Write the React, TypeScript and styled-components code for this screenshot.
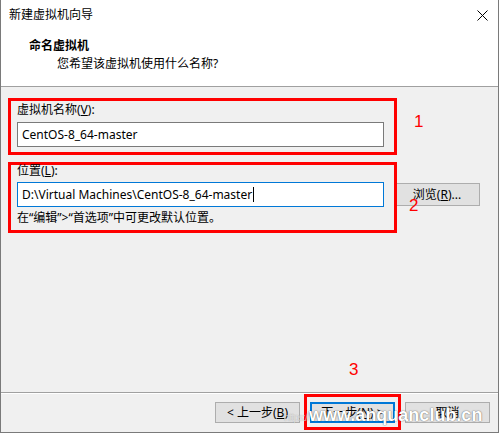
import React from "react";
import styled, { createGlobalStyle } from "styled-components";

const GlobalStyle = createGlobalStyle`
  html, body {
    margin: 0;
    padding: 0;
    background: #ffffff;
  }
  body {
    font-family: "Noto Sans", "Noto Sans CJK SC", sans-serif;
    font-size: 12px;
    color: #000;
  }
  * { box-sizing: border-box; }
`;

const Window = styled.div`
  position: relative;
  width: 499px;
  height: 433px;
  display: flex;
  flex-direction: column;
  border: 1px solid #7a7a7a;
  border-top: none;
  overflow: hidden;
`;

const TitleBar = styled.div`
  height: 30px;
  display: flex;
  align-items: center;
  padding: 0 10px 0 8px;
  background: #fff;
  line-height: 16px;
`;

const CloseIcon = styled.svg`
  margin-left: auto;
  width: 11px;
  height: 11px;
`;

const Header = styled.div`
  height: 57px;
  background: #fff;
  border-bottom: 1px solid #a0a0a0;
  padding: 8px 0 0 28px;
`;

const HeaderTitle = styled.div`
  font-weight: 700;
  line-height: 16px;
`;

const HeaderSub = styled.div`
  margin-top: 2px;
  padding-left: 28px;
  line-height: 16px;
`;

const Body = styled.div`
  flex: 1;
  background: #f0f0f0;
  padding: 11px 0 0 7px;
  display: flex;
  flex-direction: column;
  gap: 7px;
`;

const RedBox = styled.div<{ $pb: number }>`
  position: relative;
  width: 389px;
  border: 3px solid #ff0000;
  padding: 0 10px ${(p) => p.$pb}px 6px;
  z-index: 1;
`;

const Label = styled.div<{ $top: number }>`
  margin-top: ${(p) => p.$top}px;
  line-height: 16px;
`;

const TextField = styled.div<{ $focused?: boolean }>`
  margin-top: ${(p) => (p.$focused ? 3 : 4)}px;
  height: 25px;
  background: #fff;
  border: 1px solid ${(p) => (p.$focused ? "#0078d7" : "#7a7a7a")};
  padding-left: 4px;
  line-height: 23px;
  white-space: nowrap;
  display: flex;
  align-items: center;
`;

const Caret = styled.span`
  display: inline-block;
  width: 1px;
  height: 15px;
  background: #000;
  margin-left: 1px;
`;

const Hint = styled.div`
  margin-top: 3px;
  line-height: 16px;
`;

const LocationRow = styled.div`
  display: flex;
  align-items: flex-start;
`;

const Button = styled.button<{ $w: number; $h: number; $default?: boolean }>`
  position: relative;
  width: ${(p) => p.$w}px;
  height: ${(p) => p.$h}px;
  padding: 0;
  background: #e1e1e1;
  border: ${(p) => (p.$default ? "2px solid #0078d7" : "1px solid #adadad")};
  font: inherit;
  font-size: 12px;
  line-height: 16px;
  color: #000;
  white-space: nowrap;
`;

const BrowseButton = styled(Button)`
  margin: 21px 0 0 -3px;
  z-index: 0;
`;

const Highlight = styled.div`
  position: relative;
  &::after {
    content: "";
    position: absolute;
    left: -6px;
    right: -6px;
    top: -8px;
    bottom: -7px;
    border: 3px solid #ff0000;
    pointer-events: none;
  }
`;

const Footer = styled.div`
  height: 40px;
  border-top: 1px solid #a0a0a0;
  box-shadow: inset 0 1px #ffffff;
  background: #f0f0f0;
  display: flex;
  justify-content: flex-end;
  align-items: flex-start;
  gap: 10px;
  padding: 9px 8px 0 0;
`;

const Mark = styled.span<{ $x: number; $y: number }>`
  position: absolute;
  left: ${(p) => p.$x}px;
  top: ${(p) => p.$y}px;
  font-family: "Liberation Sans", Arial, sans-serif;
  font-size: 17px;
  line-height: 17px;
  color: #ff0000;
  z-index: 3;
`;

const Watermark = styled.div`
  position: absolute;
  left: 283px;
  top: 404px;
  display: flex;
  align-items: baseline;
  font-family: "Liberation Sans", Arial, sans-serif;
  color: #ffffff;
  text-shadow: 0 0 1px rgba(0, 0, 0, 0.6), 0 0 2px rgba(0, 0, 0, 0.25);
  z-index: 4;
  pointer-events: none;
  white-space: nowrap;
`;

const WatermarkScheme = styled.span`
  font-size: 11px;
  color: rgba(255, 255, 255, 0.6);
  text-shadow: 0 0 1px rgba(0, 0, 0, 0.3);
  margin-right: -22px;
  letter-spacing: -1px;
`;

const WatermarkHost = styled.span`
  font-size: 18px;
  font-weight: 700;
  line-height: 22px;
  margin-left: 22px;
`;

export default function App() {
  return (
    <>
      <GlobalStyle />
      <Window>
        <TitleBar>
          新建虚拟机向导
          <CloseIcon viewBox="0 0 11 11">
            <path d="M0.5 0.5 L10.5 10.5 M10.5 0.5 L0.5 10.5" stroke="#000" strokeWidth="1" fill="none" />
          </CloseIcon>
        </TitleBar>
        <Header>
          <HeaderTitle>命名虚拟机</HeaderTitle>
          <HeaderSub>您希望该虚拟机使用什么名称?</HeaderSub>
        </Header>
        <Body>
          <RedBox $pb={5}>
            <Label $top={1}>
              虚拟机名称(<u>V</u>):
            </Label>
            <TextField>CentOS-8_64-master</TextField>
          </RedBox>
          <LocationRow>
            <RedBox $pb={4}>
              <Label $top={-2}>
                位置(<u>L</u>):
              </Label>
              <TextField $focused>
                D:\Virtual Machines\CentOS-8_64-master
                <Caret />
              </TextField>
              <Hint>在“编辑”&gt;“首选项”中可更改默认位置。</Hint>
            </RedBox>
            <BrowseButton $w={86} $h={23}>
              浏览(<u>R</u>)...
            </BrowseButton>
          </LocationRow>
        </Body>
        <Footer>
          <Button $w={85} $h={21}>
            &lt; 上一步(<u>B</u>)
          </Button>
          <Highlight>
            <Button $w={85} $h={21} $default>
              下一步(<u>N</u>) &gt;
            </Button>
          </Highlight>
          <Button $w={85} $h={21}>
            取消
          </Button>
        </Footer>
        <Mark $x={413} $y={113}>1</Mark>
        <Mark $x={408} $y={197}>2</Mark>
        <Mark $x={348} $y={361}>3</Mark>
        <Watermark>
          <WatermarkScheme>https://</WatermarkScheme>
          <WatermarkHost>www.anquanclub.cn</WatermarkHost>
        </Watermark>
      </Window>
    </>
  );
}
